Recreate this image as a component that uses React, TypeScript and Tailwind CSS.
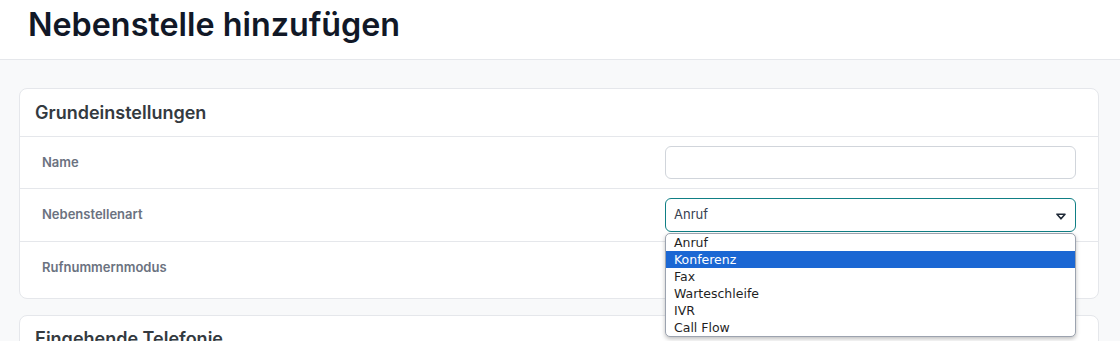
const optionen = ['Anruf', 'Konferenz', 'Fax', 'Warteschleife', 'IVR', 'Call Flow']

function Zeile({ label, children, h, last }: { label: string; children?: React.ReactNode; h: string; last?: boolean }) {
  return (
    <div className={`flex items-center ${h} pl-[22px] pr-[22px] ${last ? 'pb-[5px]' : 'border-b border-[#e5e7eb]'}`}>
      <div className="w-[623px] text-[13px] font-semibold text-[#6b7280]">{label}</div>
      <div className="flex-1">{children}</div>
    </div>
  )
}

export default function App() {
  return (
    <div className="h-[341px] bg-[#f8f9fa] font-['Inter',sans-serif] overflow-hidden">
      <header className="bg-white h-[60px] border-b border-[#e5e7eb] px-[28px] flex items-center">
        <h1 className="text-[32.3px] font-semibold text-[#111827] leading-none -mt-[8px]">Nebenstelle hinzufügen</h1>
      </header>

      <div className="pl-[19px] pr-[21px] pt-[28px] flex flex-col gap-[16px]">
        <section className="bg-white border border-[#e5e7eb] rounded-[8px]">
          <div className="h-[48px] border-b border-[#e5e7eb] px-[15px] flex items-center">
            <h2 className="text-[18px] font-semibold text-[#343a40]">Grundeinstellungen</h2>
          </div>
          <Zeile label="Name" h="h-[52px]">
            <input className="w-[411px] h-[33px] border border-[#d1d5db] rounded-[6px] bg-white outline-none" />
          </Zeile>
          <Zeile label="Nebenstellenart" h="h-[53px]">
            <div className="relative w-[411px]">
              <div className="h-[34px] border border-[#0f7f85] rounded-[6px] bg-white flex items-center justify-between px-[8px] text-[13px] text-[#374151]">
                <span>Anruf</span>
                <svg width="10" height="7" viewBox="0 0 10 7" className="mr-[1px] mt-[2px]">
                  <path d="M1 1.2h8L5 5.8z" fill="none" stroke="#1f2937" strokeWidth="1.6" strokeLinejoin="round" />
                </svg>
              </div>
              <ul className="absolute z-10 left-0 top-[35px] w-[411px] bg-white border border-[#9ca3af] rounded-[5px] shadow-[0_2px_4px_rgba(0,0,0,0.25)] font-['DejaVu_Sans',sans-serif] text-[12.5px] text-[#1f1f1f]">
                {optionen.map(o => (
                  <li
                    key={o}
                    className={`h-[17px] leading-[17px] px-[8px] ${o === 'Konferenz' ? 'bg-[#1b67d3] text-white' : ''}`}
                  >
                    {o}
                  </li>
                ))}
              </ul>
            </div>
          </Zeile>
          <Zeile label="Rufnummernmodus" h="h-[56px]" last />
        </section>

        <section className="bg-white border border-[#e5e7eb] rounded-[8px]">
          <div className="h-[44px] px-[15px] flex items-center">
            <h2 className="text-[18px] font-semibold text-[#343a40]">Eingehende Telefonie</h2>
          </div>
        </section>
      </div>
    </div>
  )
}
